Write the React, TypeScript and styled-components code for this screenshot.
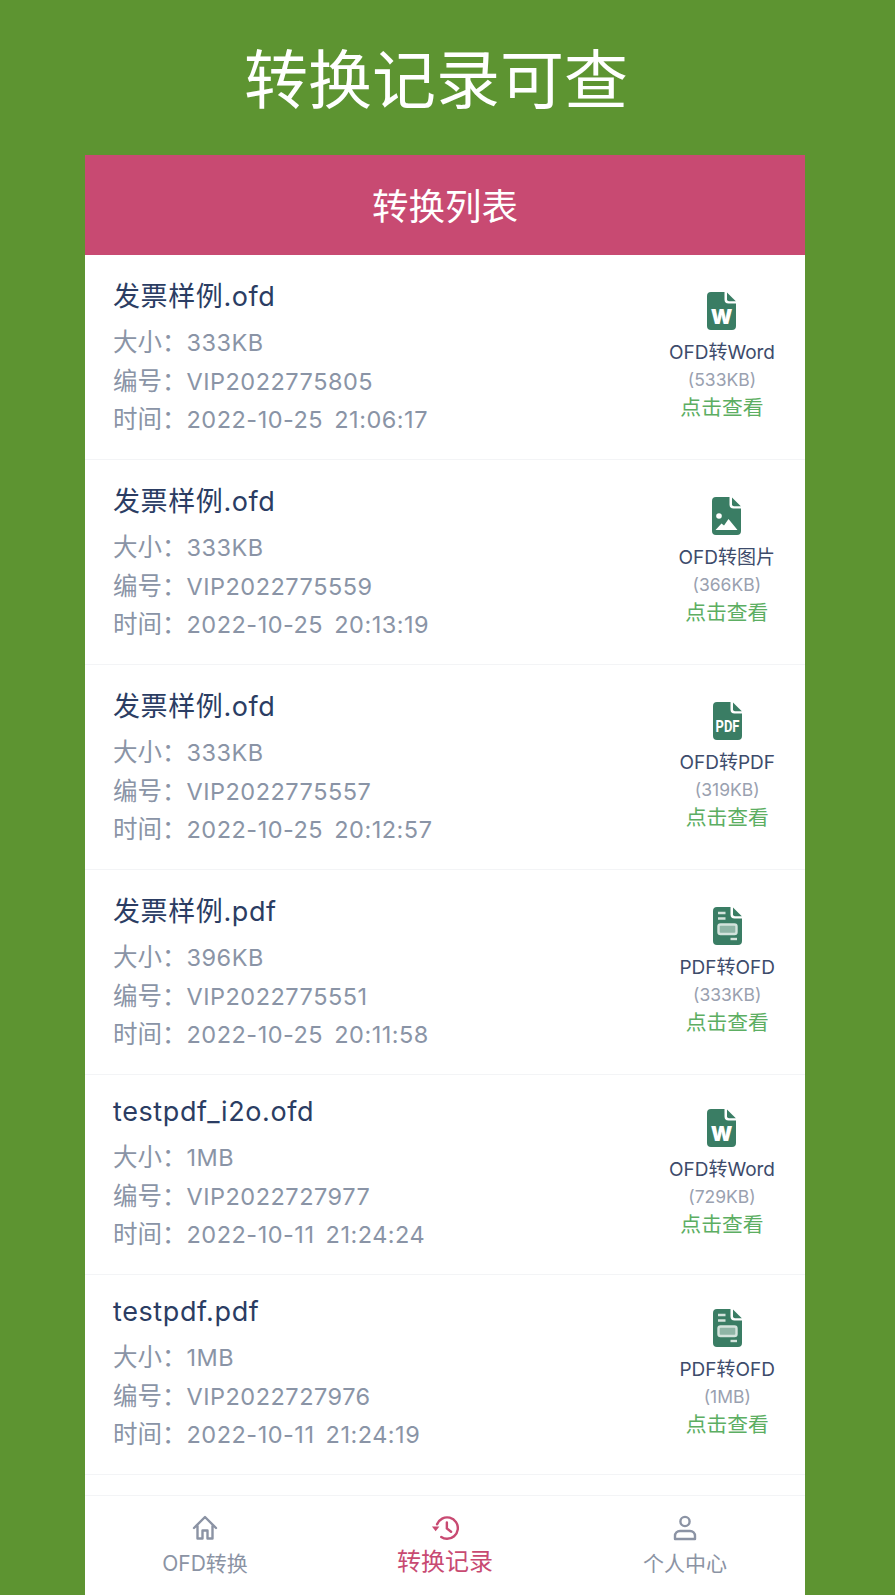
import React from 'react';
import styled, { createGlobalStyle } from 'styled-components';

const GlobalStyle = createGlobalStyle`
    html, body {
        margin: 0;
        padding: 0;
        background: #5d9431;
    }
    * {
        box-sizing: border-box;
    }
`;

const FONT = `Inter, "Noto Sans CJK SC", sans-serif`;

const Page = styled.div`
    width: 895px;
    height: 1595px;
    overflow: hidden;
    background: #5d9431;
    display: flex;
    flex-direction: column;
    font-family: ${FONT};
`;
const Title = styled.h1`
    height: 155px;
    margin: 0;
    padding: 0 23px 6px 0;
    display: flex;
    align-items: center;
    justify-content: center;
    color: #fff;
    font-size: 64px;
    font-weight: 400;
`;
const Card = styled.div`
    flex: 1;
    min-height: 0;
    width: 720px;
    margin-left: 85px;
    display: flex;
    flex-direction: column;
    background: #fff;
`;
const Header = styled.div`
    height: 100px;
    padding-bottom: 2px;
    display: flex;
    align-items: center;
    justify-content: center;
    background: #c84a72;
    color: #fff;
    font-size: 36.5px;
`;
const List = styled.div`
    flex: 1;
    min-height: 0;
    overflow: hidden;
`;
const Row = styled.div<{ $short?: boolean }>`
    height: ${p => (p.$short ? 200 : 205)}px;
    padding: 0 30px 0 28px;
    display: flex;
    justify-content: space-between;
    align-items: center;
    border-bottom: 1px solid #f3f4f6;
`;
const Info = styled.div`
    display: flex;
    flex-direction: column;
`;
const Name = styled.div<{ $short?: boolean }>`
    height: ${p => (p.$short ? 43 : 48)}px;
    line-height: ${p => (p.$short ? 34 : 44)}px;
    color: #2b3d63;
    font-size: 27px;
    letter-spacing: 0.6px;
`;
const Meta = styled.div`
    height: 38.5px;
    line-height: 38.5px;
    color: #8a94a6;
    font-size: 24.5px;
    white-space: nowrap;
`;
const MetaValue = styled.span`
    font-size: 23.5px;
    letter-spacing: 0.5px;
    word-spacing: 4px;
`;
const Convert = styled.div`
    display: flex;
    flex-direction: column;
    align-items: center;
`;
const IconBox = styled.div`
    height: 39px;
    margin-bottom: 8px;
    display: flex;
    color: #3a7d64;
`;
const Target = styled.div`
    height: 28px;
    line-height: 28px;
    color: #3d4b6b;
    font-size: 19px;
    white-space: nowrap;
`;
const Size = styled.div`
    height: 26px;
    line-height: 26px;
    color: #9aa1b0;
    font-size: 17.5px;
`;
const Action = styled.div`
    height: 30px;
    line-height: 30px;
    color: #5cae62;
    font-size: 20.8px;
`;
const TabBar = styled.div`
    height: 100px;
    display: grid;
    grid-template-columns: 240px 240px 240px;
    border-top: 1px solid #f3f4f6;
`;
const Tab = styled.div<{ $active?: boolean }>`
    display: flex;
    flex-direction: column;
    align-items: center;
    padding-top: 19px;
    gap: ${p => (p.$active ? 6 : 8)}px;
    color: ${p => (p.$active ? '#c84a72' : '#8b93a4')};
    font-size: ${p => (p.$active ? 24 : 21)}px;
    line-height: 30px;
`;

type FileKind = 'word' | 'image' | 'pdf' | 'ofd';

const SHEET = 'M4 0H17.5V7.5a4 4 0 0 0 4 4H29V34a4 4 0 0 1-4 4H4a4 4 0 0 1-4-4V4a4 4 0 0 1 4-4Z';
const FOLD = 'M20 0.5 28.8 9.2H22a2 2 0 0 1-2-2Z';

function FileIcon({ kind }: { kind: FileKind }) {
    return (
        <svg width="29" height="38" viewBox="0 0 29 38" fill="currentColor">
            <path d={SHEET} />
            <path d={FOLD} />
            {kind === 'word' && (
                <text x="14.5" y="32" textAnchor="middle" fontFamily="Inter, sans-serif" fontSize="20" fontWeight="900" fill="#fff">W</text>
            )}
            {kind === 'pdf' && (
                <text x="14.5" y="24" transform="scale(1 1.25)" textAnchor="middle" fontFamily="Roboto, sans-serif" fontSize="13" fontWeight="700" fill="#fff">PDF</text>
            )}
            {kind === 'image' && (
                <g fill="#fff">
                    <circle cx="7" cy="19" r="2.8" />
                    <path d="M3.5 33 9.5 26.5 12 28.5 16.5 22 25.5 33Z" />
                </g>
            )}
            {kind === 'ofd' && (
                <g fill="none" stroke="#d3e3dc" strokeWidth="2.4">
                    <path d="M5 6H12.5M5 11.5H12.5" />
                    <rect x="5.5" y="17.5" width="18" height="9.5" rx="2" fill="#8fb5a6" />
                    <path d="M17.5 32H24" />
                </g>
            )}
        </svg>
    );
}

function HomeIcon() {
    return (
        <svg width="26" height="26" viewBox="0 0 26 26" fill="none" stroke="currentColor" strokeWidth="2.4" strokeLinejoin="round" strokeLinecap="round">
            <path d="M2 13 13 2 24 13M5.5 10.5V23.5H10.5V15.5H15.5V23.5H20.5V10.5" />
        </svg>
    );
}

function HistoryIcon() {
    return (
        <svg width="28" height="26" viewBox="0 0 30 26" fill="none" stroke="currentColor" strokeWidth="2.6" strokeLinecap="round">
            <path d="M6.5 9A11.5 11.5 0 1 1 17 24.6a11 11 0 0 1-6-2" />
            <path d="M1 11.5H9L5 16.5Z" fill="currentColor" stroke="none" />
            <path d="M17 7V13.5L21.5 17" />
        </svg>
    );
}

function UserIcon() {
    return (
        <svg width="24" height="26" viewBox="0 0 24 26" fill="none" stroke="currentColor" strokeWidth="2.4">
            <circle cx="12" cy="6.5" r="4.6" />
            <path d="M2 24V21a5 5 0 0 1 5-5H17a5 5 0 0 1 5 5V24Z" strokeLinejoin="round" />
        </svg>
    );
}

type Record = {
    name: string;
    size: string;
    code: string;
    time: string;
    kind: FileKind;
    target: string;
    result: string;
    short?: boolean;
};

const records: Record[] = [
    { name: '发票样例.ofd', size: '333KB', code: 'VIP2022775805', time: '2022-10-25 21:06:17', kind: 'word', target: 'OFD转Word', result: '533KB' },
    { name: '发票样例.ofd', size: '333KB', code: 'VIP2022775559', time: '2022-10-25 20:13:19', kind: 'image', target: 'OFD转图片', result: '366KB' },
    { name: '发票样例.ofd', size: '333KB', code: 'VIP2022775557', time: '2022-10-25 20:12:57', kind: 'pdf', target: 'OFD转PDF', result: '319KB' },
    { name: '发票样例.pdf', size: '396KB', code: 'VIP2022775551', time: '2022-10-25 20:11:58', kind: 'ofd', target: 'PDF转OFD', result: '333KB' },
    { name: 'testpdf_i2o.ofd', size: '1MB', code: 'VIP2022727977', time: '2022-10-11 21:24:24', kind: 'word', target: 'OFD转Word', result: '729KB', short: true },
    { name: 'testpdf.pdf', size: '1MB', code: 'VIP2022727976', time: '2022-10-11 21:24:19', kind: 'ofd', target: 'PDF转OFD', result: '1MB', short: true },
];

export default function App() {
    return (
        <Page>
            <GlobalStyle />
            <Title>转换记录可查</Title>
            <Card>
                <Header>转换列表</Header>
                <List>
                    {records.map(record => (
                        <Row key={record.code} $short={record.short}>
                            <Info>
                                <Name $short={record.short}>{record.name}</Name>
                                <Meta>大小：<MetaValue>{record.size}</MetaValue></Meta>
                                <Meta>编号：<MetaValue>{record.code}</MetaValue></Meta>
                                <Meta>时间：<MetaValue>{record.time}</MetaValue></Meta>
                            </Info>
                            <Convert>
                                <IconBox><FileIcon kind={record.kind} /></IconBox>
                                <Target>{record.target}</Target>
                                <Size>({record.result})</Size>
                                <Action>点击查看</Action>
                            </Convert>
                        </Row>
                    ))}
                </List>
                <TabBar>
                    <Tab><HomeIcon />OFD转换</Tab>
                    <Tab $active><HistoryIcon />转换记录</Tab>
                    <Tab><UserIcon />个人中心</Tab>
                </TabBar>
            </Card>
        </Page>
    );
}
